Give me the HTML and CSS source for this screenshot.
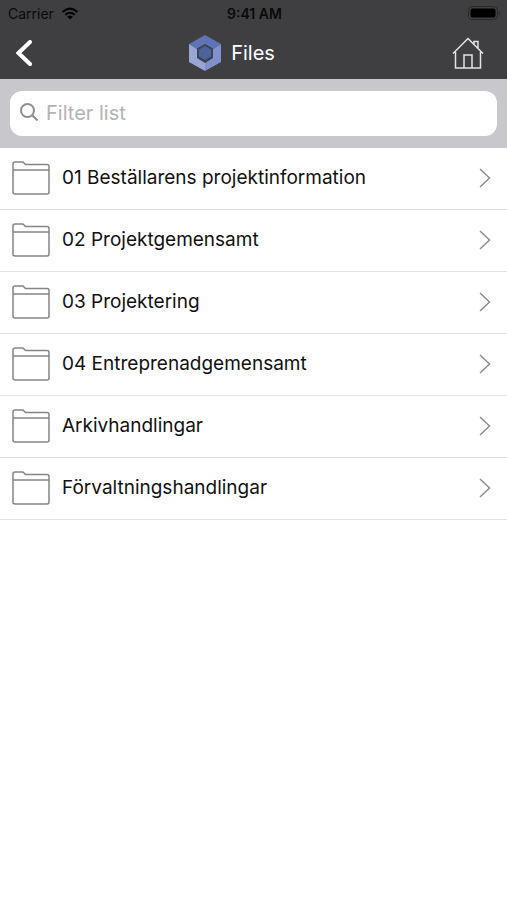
FILE: index.html
```html
<!DOCTYPE html>
<html lang="en">
<head>
    <meta charset="UTF-8">
    <meta name="viewport" content="width=device-width, initial-scale=1.0">
    <title>Files</title>
    <link rel="stylesheet" href="styles.css">
</head>
<body>

<!-- Shared icons -->
<svg class="sprite" aria-hidden="true">
    <symbol id="icon-folder" viewBox="0 0 38 34">
        <path d="M1 31V3q0-2 2-2h7q1.500 0 2 1l1.500 1.500h21.500q2 0 2 2V31q0 2-2 2H3q-2 0-2-2zM1 9h36"/>
    </symbol>
    <symbol id="icon-chevron" viewBox="0 0 12 20">
        <path d="M1 1l9.500 9L1 19"/>
    </symbol>
</svg>

<header class="header">
    <div class="status-bar">
        <div class="carrier">
            <span>Carrier</span>
            <svg class="wifi" viewBox="0 0 18 13" aria-hidden="true">
                <path d="M1.500 5Q9-1.800 16.500 5M4.300 7.800Q9 3.600 13.700 7.800"/>
                <path class="dot" d="M6.200 9.700Q9 7.400 11.800 9.700L9 12.600z"/>
            </svg>
        </div>
        <span class="time">9:41 AM</span>
        <svg class="battery" viewBox="0 0 33 15" aria-hidden="true">
            <rect class="shell" x="0.500" y="0.500" width="29" height="13" rx="4"/>
            <rect x="2.500" y="2.500" width="25" height="9" rx="2"/>
            <path class="cap" d="M31 4.500q2 2.500 0 5z"/>
        </svg>
    </div>

    <nav class="nav-bar">
        <button class="icon-btn back-btn" aria-label="Back">
            <svg width="16" height="26" viewBox="0 0 16 26"><path d="M14 2L2.500 13 14 24"/></svg>
        </button>
        <h1 class="title">
            <svg width="32" height="36" viewBox="0 0 32 36" aria-hidden="true">
                <path fill="#5f74b6" d="M16 0l16 9-8 5-8-5-8 5-8-5z"/>
                <path fill="#98a6d6" d="M0 9l8 5v9l8 5v8L0 27z"/>
                <path fill="#8290cb" d="M32 9l-8 5v9l-8 5v8l16-9z"/>
                <path fill="#3c4550" d="M16 9l8 4.500v9L16 27l-8-4.500v-9z"/>
                <path fill="#4c639c" d="M16 11l6 3.500v7L16 25l-6-3.500v-7z"/>
            </svg>
            Files
        </h1>
        <button class="icon-btn home-btn" aria-label="Home">
            <svg width="32" height="32" viewBox="0 0 32 32">
                <path d="M1 16.500L16 1.500l15 15M3.500 15v16h25V15M12 31V18h8v13M22 7V4.500h4V11"/>
            </svg>
        </button>
    </nav>
</header>

<form class="search-bar" role="search">
    <label class="search-field">
        <svg width="19" height="19" viewBox="0 0 19 19" aria-hidden="true">
            <circle cx="7.500" cy="7.500" r="6.500"/>
            <path d="M12.500 12.500l5 5"/>
        </svg>
        <input type="text" placeholder="Filter list" aria-label="Filter list">
    </label>
</form>

<ul class="file-list">
    <li><a href="#"><svg class="folder"><use href="#icon-folder"/></svg><span>01 Beställarens projektinformation</span><svg class="chevron"><use href="#icon-chevron"/></svg></a></li>
    <li><a href="#"><svg class="folder"><use href="#icon-folder"/></svg><span>02 Projektgemensamt</span><svg class="chevron"><use href="#icon-chevron"/></svg></a></li>
    <li><a href="#"><svg class="folder"><use href="#icon-folder"/></svg><span>03 Projektering</span><svg class="chevron"><use href="#icon-chevron"/></svg></a></li>
    <li><a href="#"><svg class="folder"><use href="#icon-folder"/></svg><span>04 Entreprenadgemensamt</span><svg class="chevron"><use href="#icon-chevron"/></svg></a></li>
    <li><a href="#"><svg class="folder"><use href="#icon-folder"/></svg><span>Arkivhandlingar</span><svg class="chevron"><use href="#icon-chevron"/></svg></a></li>
    <li><a href="#"><svg class="folder"><use href="#icon-folder"/></svg><span>Förvaltningshandlingar</span><svg class="chevron"><use href="#icon-chevron"/></svg></a></li>
</ul>

</body>
</html>
```
FILE: styles.css
```css
* {
    box-sizing: border-box;
}

body {
    margin: 0;
    font-family: Inter, "Liberation Sans", sans-serif;
    background-color: #fff;
    color: #111;
}

.sprite {
    display: none;
}

/* Header */
.header {
    background-color: #3f3f41;
}

.status-bar {
    display: grid;
    grid-template-columns: 1fr auto 1fr;
    align-items: center;
    height: 27px;
    padding: 0 6px 0 8px;
    font-size: 14px;
    color: #0a0a0a;
}

.carrier {
    display: flex;
    align-items: center;
    gap: 7px;
}

.time {
    font-weight: 600;
}

.wifi {
    width: 18px;
    height: 13px;
    fill: none;
    stroke: #000;
    stroke-width: 2;
}

.wifi .dot {
    fill: #000;
    stroke: none;
}

.battery {
    width: 33px;
    height: 15px;
    justify-self: end;
}

.battery .shell {
    fill: none;
    stroke: #29292b;
}

.battery .cap {
    fill: #29292b;
}

.nav-bar {
    display: grid;
    grid-template-columns: 1fr auto 1fr;
    align-items: center;
    height: 52px;
    padding: 0 23px 0 16px;
}

.icon-btn {
    display: flex;
    padding: 0;
    border: none;
    background: none;
    cursor: pointer;
}

.icon-btn svg {
    fill: none;
    stroke: #fff;
}

.back-btn svg {
    stroke-width: 4;
    stroke-linecap: round;
}

.home-btn {
    justify-self: end;
}

.home-btn svg {
    stroke: #e4e4e4;
    stroke-width: 1.5;
}

.title {
    display: flex;
    align-items: center;
    gap: 10px;
    margin: 0;
    padding-right: 36px;
    font-size: 20px;
    font-weight: 400;
    color: #fff;
}

/* Search */
.search-bar {
    padding: 12px 10px;
    background-color: #c8c7cb;
}

.search-field {
    display: flex;
    align-items: center;
    gap: 7px;
    height: 45px;
    padding: 0 10px 2px;
    border-radius: 12px;
    background-color: #fff;
}

.search-field svg {
    fill: none;
    stroke: #8e8e90;
    stroke-width: 2;
}

.search-field input {
    flex: 1;
    min-width: 0;
    padding: 0;
    border: none;
    outline: none;
    background: none;
    font: inherit;
    font-size: 20px;
}

.search-field input::placeholder {
    color: #b4b4b6;
}

/* File list */
.file-list {
    margin: 0;
    padding: 0;
    list-style: none;
}

.file-list a {
    display: flex;
    align-items: center;
    gap: 12px;
    height: 62px;
    padding: 0 16px 2px 12px;
    border-bottom: 1px solid #e2e2e4;
    font-size: 19px;
    color: inherit;
    text-decoration: none;
}

.file-list span {
    flex: 1;
}

.folder {
    width: 38px;
    height: 34px;
    fill: none;
    stroke: #858585;
    stroke-width: 1.5;
}

.chevron {
    width: 12px;
    height: 20px;
    fill: none;
    stroke: #8c8c8e;
    stroke-width: 1.5;
}
```
